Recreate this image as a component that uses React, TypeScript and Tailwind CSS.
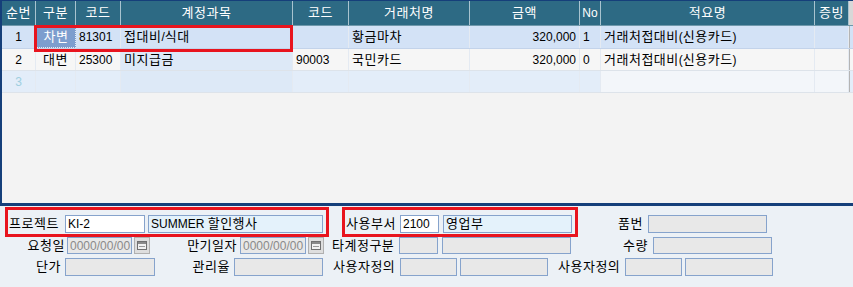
import React from "react";

const FONT = '"Liberation Sans", "Noto Sans CJK KR", sans-serif';

function K({ s }: { s?: string }) {
  if (!s) return null;
  const parts = s.split(/([\uAC00-\uD7A3]+)/);
  return (
    <span className="whitespace-pre">
      {parts.map((p, i) =>
        /[\uAC00-\uD7A3]/.test(p) ? (
          <span key={i} className="text-[13px] tracking-[0.5px]">
            {p}
          </span>
        ) : (
          <span key={i}>{p}</span>
        )
      )}
    </span>
  );
}

const cols = [
  { w: 34, label: "순번" },
  { w: 40, label: "구분" },
  { w: 45, label: "코드" },
  { w: 172, label: "계정과목" },
  { w: 56, label: "코드" },
  { w: 121, label: "거래처명" },
  { w: 110, label: "금액" },
  { w: 21, label: "No" },
  { w: 214, label: "적요명" },
  { w: 34, label: "증빙" },
];

type Cell = { t?: string; align?: "l" | "c" | "r"; cls?: string; bg?: string };

function Row({ h, bg, cells, border }: { h: string; bg: string; cells: Cell[]; border: string }) {
  return (
    <div className={`flex ${h} ${bg} border-b ${border}`}>
      {cols.map((c, i) => {
        const cell = cells[i] || {};
        const al = cell.align === "c" ? "justify-center" : cell.align === "r" ? "justify-end pr-[3px]" : "justify-start pl-[3px]";
        return (
          <div
            key={i}
            style={{ width: c.w }}
            className={`flex items-center shrink-0 whitespace-nowrap border-r border-[#e4eaf2] ${al} ${cell.bg || ""} ${cell.cls || ""}`}
          >
            <K s={cell.t} />
          </div>
        );
      })}
      <div className="flex-1 border-l border-[#b4b4b4]" />
    </div>
  );
}

function Input({ w, bg = "bg-[#e8e8e8]", text, tc = "text-black" }: { w: string; bg?: string; text?: string; tc?: string }) {
  return (
    <div className={`${w} h-full shrink-0 border border-[#86a3cc] ${bg} ${tc} flex items-center pl-[2px] overflow-hidden whitespace-nowrap`}>
      <K s={text} />
    </div>
  );
}

function Cal() {
  return (
    <div className="w-[16px] h-full shrink-0 border border-[#b0b0b0] bg-[#dedede] flex items-center justify-center">
      <svg width="10" height="9" viewBox="0 0 10 9">
        <rect x="0.5" y="0.5" width="9" height="8" fill="#f2f2f2" stroke="#707070" />
        <rect x="1" y="1" width="8" height="2" fill="#8a8a8a" />
        <line x1="2" y1="5.5" x2="8" y2="5.5" stroke="#9a9a9a" />
      </svg>
    </div>
  );
}

function Label({ w, text, right = true, cls = "" }: { w: string; text: string; right?: boolean; cls?: string }) {
  return (
    <div className={`${w} shrink-0 flex items-center ${right ? "justify-end" : "justify-start"} whitespace-nowrap ${cls}`}>
      <K s={text} />
    </div>
  );
}

export default function App() {
  return (
    <div className="relative w-[853px] h-[287px] overflow-hidden bg-[#ecf1f6] text-[12px] text-black" style={{ fontFamily: FONT }}>
      {/* Grid */}
      <div className="flex flex-col h-[206px] border-l-2 border-t border-b-[3px] border-[#153f7a] bg-[#f3f3f3]">
        {/* header */}
        <div className="flex h-[25px] bg-[#2d6a84] text-white border-b border-[#6f98ab]">
          {cols.map((c, i) => (
            <div key={i} style={{ width: c.w }} className="shrink-0 flex items-center justify-center border-r border-[#a8c3cf] whitespace-nowrap">
              <K s={c.label} />
            </div>
          ))}
          <div className="flex-1 bg-[#d8d8d8]" />
        </div>
        <Row
          h="h-[23px]"
          bg="bg-[#d3e2f6]"
          border="border-[#c3d3ea]"
          cells={[
            { t: "1", align: "c" },
            { t: "차변", align: "c", bg: "bg-[#7d9dce] text-white border border-dotted border-[#30405a]" },
            { t: "81301" },
            { t: "접대비/식대" },
            {},
            { t: "황금마차" },
            { t: "320,000", align: "r" },
            { t: "1" },
            { t: "거래처접대비(신용카드)" },
            {},
          ]}
        />
        <Row
          h="h-[22px]"
          bg="bg-[#f6f6f6]"
          border="border-[#dde3ea]"
          cells={[
            { t: "2", align: "c" },
            { t: "대변", align: "c" },
            { t: "25300" },
            { t: "미지급금", bg: "bg-[#dde9f7]" },
            { t: "90003" },
            { t: "국민카드" },
            { t: "320,000", align: "r" },
            { t: "0" },
            { t: "거래처접대비(신용카드)" },
            {},
          ]}
        />
        <Row
          h="h-[22px]"
          bg="bg-[#e3edf9]"
          border="border-[#dde3ea]"
          cells={[
            { t: "3", align: "c", cls: "text-[#9fcfe0]" },
            {},
            {},
            { bg: "bg-[#dde9f7]" },
            {},
            {},
            {},
            {},
            { bg: "bg-[#f3f6fa]" },
            { bg: "bg-[#f3f6fa]" },
          ]}
        />
        <div className="flex-1" />
      </div>

      {/* Bottom panel */}
      <div className="flex flex-col">
        <div className="flex h-[18px] mt-[9px] items-center">
          <Label w="w-[65px]" text="프로젝트" right={false} cls="pl-[9px]" />
          <Input w="w-[80px]" bg="bg-white" text="KI-2" />
          <div className="w-[3px]" />
          <Input w="w-[175px]" bg="bg-[#e4f2fb]" text="SUMMER 할인행사" />
          <Label w="w-[77px]" text="사용부서" right={false} cls="pl-[23px]" />
          <Input w="w-[39px]" bg="bg-white" text="2100" />
          <div className="w-[4px]" />
          <Input w="w-[129px]" bg="bg-[#e4f2fb]" text="영업부" />
          <Label w="w-[76px]" text="품번" cls="pr-[5px]" />
          <Input w="w-[119px]" />
        </div>
        <div className="flex h-[17px] mt-[4px] items-center">
          <Label w="w-[67px]" text="요청일" cls="pr-[2px]" />
          <Input w="w-[65px]" text="0000/00/00" tc="text-[#8a8a8a]" />
          <div className="w-[2px]" />
          <Cal />
          <Label w="w-[90px]" text="만기일자" cls="pr-[3px]" />
          <Input w="w-[66px]" text="0000/00/00" tc="text-[#8a8a8a]" />
          <div className="w-[2px]" />
          <Cal />
          <Label w="w-[75px]" text="타계정구분" right={false} cls="pl-[8px]" />
          <Input w="w-[39px]" />
          <div className="w-[4px]" />
          <Input w="w-[129px]" />
          <Label w="w-[82px]" text="수량" cls="pr-[5px]" />
          <Input w="w-[119px]" />
        </div>
        <div className="flex h-[18px] mt-[4px] items-center">
          <Label w="w-[65px]" text="단가" cls="pr-[4px]" />
          <Input w="w-[90px]" />
          <Label w="w-[79px]" text="관리율" cls="pr-[4px]" />
          <Input w="w-[89px]" />
          <Label w="w-[77px]" text="사용자정의" right={false} cls="pl-[10px]" />
          <Input w="w-[57px]" />
          <div className="w-[3px]" />
          <Input w="w-[88px]" />
          <Label w="w-[77px]" text="사용자정의" right={false} cls="pl-[10px]" />
          <Input w="w-[57px]" />
          <div className="w-[3px]" />
          <Input w="w-[88px]" />
        </div>
      </div>

      {/* Red annotation boxes */}
      <div className="absolute left-[34px] top-[25px] w-[259px] h-[27px] border-[3px] border-[#e8141e] pointer-events-none" />
      <div className="absolute left-[5px] top-[207px] w-[324px] h-[30px] border-[3px] border-[#e8141e] pointer-events-none" />
      <div className="absolute left-[342px] top-[207px] w-[236px] h-[30px] border-[3px] border-[#e8141e] pointer-events-none" />
    </div>
  );
}
